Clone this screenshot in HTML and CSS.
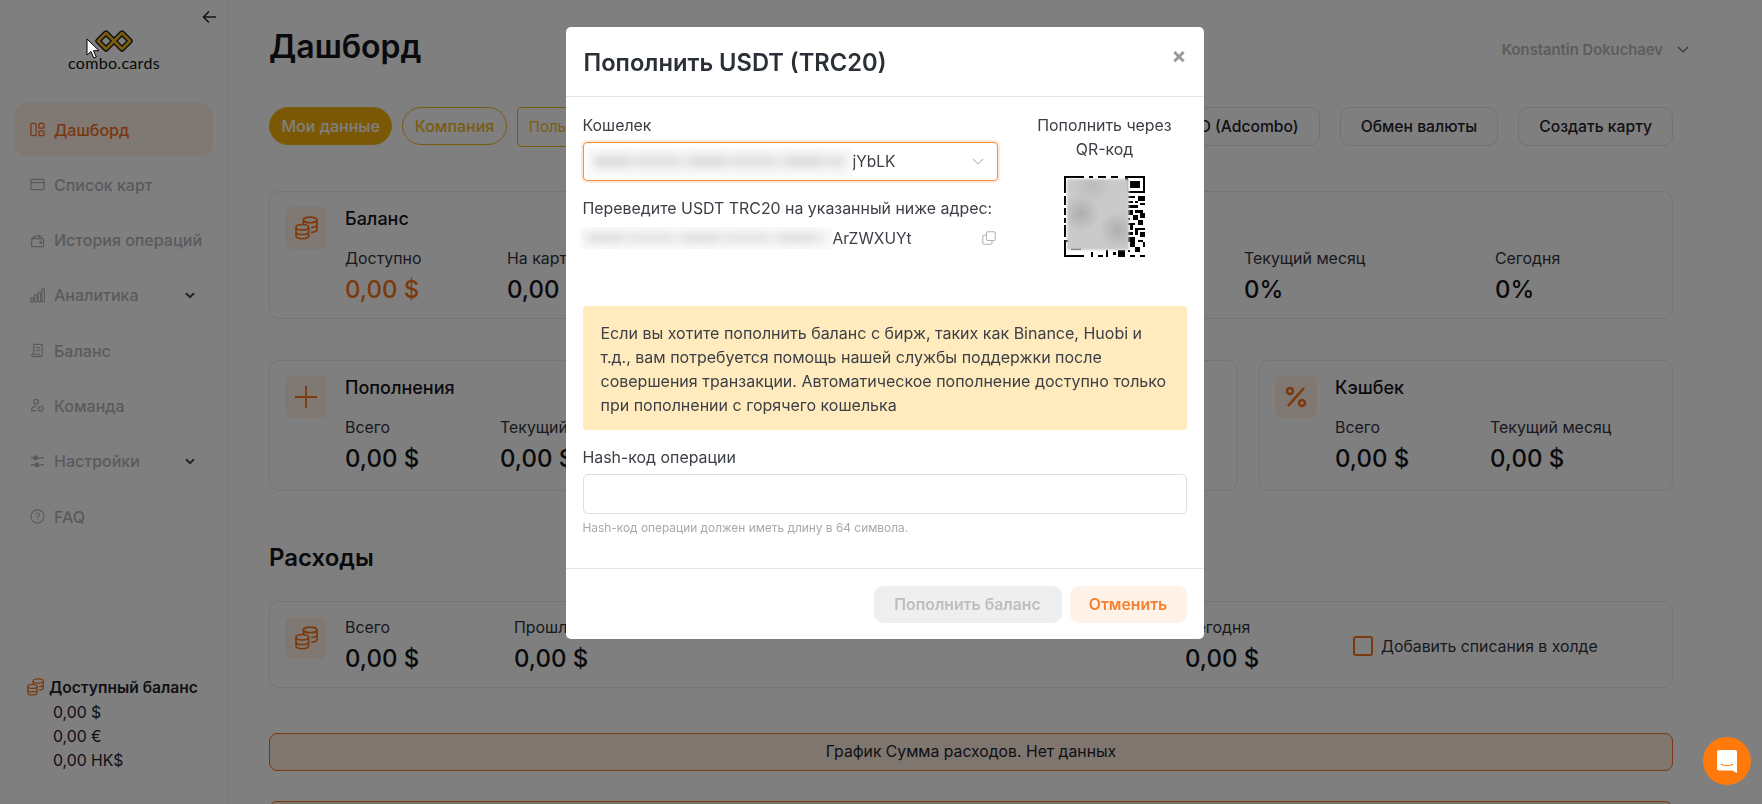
FILE: index.html
```html
<!DOCTYPE html>
<html lang="ru">
<head>
    <meta charset="UTF-8">
    <meta name="viewport" content="width=device-width, initial-scale=1.0">
    <title>Дашборд</title>
    <link rel="stylesheet" href="styles.css">
</head>
<body>

    <svg class="sprite" width="0" height="0">
        <symbol id="coins" viewBox="1 1 22 22.500" fill="none" stroke="currentColor" stroke-width="1.600">
            <ellipse cx="15.500" cy="4.500" rx="6.500" ry="2.700"/>
            <path d="M9 4.500V9M22 4.500v9.500c0 1.300-2.500 2.200-5.500 2.400M22 9.300c0 1.300-2.500 2.200-5.500 2.400"/>
            <ellipse cx="8" cy="11.500" rx="6" ry="2.600"/>
            <path d="M2 11.500V20c0 1.400 2.700 2.500 6 2.500s6-1.100 6-2.500v-8.500M2 16c0 1.400 2.700 2.500 6 2.500s6-1.100 6-2.500"/>
        </symbol>
    </svg>

    <div class="layout">
        <aside class="sidebar">
            <div class="sidebar-head">
                <button class="collapse-btn">
                    <svg width="16" height="14" viewBox="0 0 16 14" fill="none" stroke="#2b2b33" stroke-width="1.6"><path d="M14 7H2M7 1.500 1.500 7 7 12.500"/></svg>
                </button>
                <div class="logo">
                    <svg width="42" height="22" viewBox="0 0 42 22" fill="none" stroke-linejoin="round">
                        <path d="M13 3 5 11l8 8L29 3l8 8-8 8Z" stroke="#1a1a1a" stroke-width="5.400"/>
                        <path d="M13 3 5 11l8 8L29 3l8 8-8 8Z" stroke="#f5b81c" stroke-width="2.800"/>
                    </svg>
                    <span class="logo-text">combo.cards</span>
                </div>
            </div>

            <nav class="nav">
                <a class="nav-item active">
                    <svg class="nav-icon" viewBox="0 0 16 16" fill="none" stroke="currentColor" stroke-width="1.300"><rect x="1" y="1.500" width="5.500" height="13" rx="1"/><rect x="9.500" y="1.500" width="5.500" height="5" rx="1"/><rect x="9.500" y="9.500" width="5.500" height="5" rx="1"/></svg>
                    <span>Дашборд</span>
                </a>
                <a class="nav-item">
                    <svg class="nav-icon" viewBox="0 0 16 16" fill="none" stroke="currentColor" stroke-width="1.300"><rect x="1" y="2.500" width="14" height="11" rx="1"/><path d="M1 6h14"/></svg>
                    <span>Список карт</span>
                </a>
                <a class="nav-item">
                    <svg class="nav-icon" viewBox="0 0 16 16" fill="none" stroke="currentColor" stroke-width="1.300"><path d="M1.500 6.500c0-.8.500-1.300 1.200-1.500L10 2.500v3M2 6h11.500c.5 0 1 .5 1 1v6.500c0 .5-.5 1-1 1h-11c-.5 0-1-.5-1-1Z"/><path d="M12 2.500v3"/><circle cx="11.500" cy="10" r="1"/></svg>
                    <span>История операций</span>
                </a>
                <a class="nav-item">
                    <svg class="nav-icon" viewBox="0 0 16 16" fill="none" stroke="currentColor" stroke-width="1.300"><rect x=".8" y="10" width="2.800" height="5" rx="1.400"/><rect x="4.800" y="7" width="2.800" height="8" rx="1.400"/><rect x="8.700" y="4.500" width="2.800" height="10.500" rx="1.400"/><rect x="12.600" y="1" width="2.800" height="14" rx="1.400"/></svg>
                    <span>Аналитика</span>
                    <svg class="nav-caret" width="10" height="7" viewBox="0 0 10 7" fill="none" stroke="currentColor" stroke-width="2"><path d="M1 1.200 5 5.200 9 1.200"/></svg>
                </a>
                <a class="nav-item">
                    <svg class="nav-icon" viewBox="0 0 16 16" fill="none" stroke="currentColor" stroke-width="1.300"><path d="M4 12V2.500c0-.5.500-1 1-1h8v11.500c0 1-.8 1.500-1.500 1.500h-8C2.500 14.500 2 14 2 13.300V12h8v1.300M6.500 5H11M6.500 8H11"/></svg>
                    <span>Баланс</span>
                </a>
                <a class="nav-item">
                    <svg class="nav-icon" viewBox="0 0 16 16" fill="none" stroke="currentColor" stroke-width="1.300"><circle cx="6.500" cy="4" r="2.500"/><path d="M1.500 13.500c0-3 2-4.500 5-4.500"/><circle cx="11.500" cy="11.500" r="2.500"/><path d="M1.500 13.500H7"/></svg>
                    <span>Команда</span>
                </a>
                <a class="nav-item">
                    <svg class="nav-icon" viewBox="0 0 16 16" fill="none" stroke="currentColor" stroke-width="1.500"><path d="M9 4h6M1 4h2M11 11.500h4M1 11.500h4"/><circle cx="6" cy="4" r="2" fill="currentColor"/><circle cx="7.500" cy="11.500" r="2" fill="currentColor"/></svg>
                    <span>Настройки</span>
                    <svg class="nav-caret" width="10" height="7" viewBox="0 0 10 7" fill="none" stroke="currentColor" stroke-width="2"><path d="M1 1.200 5 5.200 9 1.200"/></svg>
                </a>
                <a class="nav-item">
                    <svg class="nav-icon" viewBox="0 0 16 16" fill="none" stroke="currentColor" stroke-width="1.200"><circle cx="8" cy="8" r="7"/><path d="M5.900 6.200C6 5 6.900 4.300 8 4.300c1.200 0 2.100.8 2.100 1.900 0 1.700-2.100 1.700-2.100 3.300M8 11v.9"/></svg>
                    <span>FAQ</span>
                </a>
            </nav>

            <div class="side-balance">
                <div class="side-balance-title">
                    <svg class="coin-small"><use href="#coins"/></svg>
                    <span>Доступный баланс</span>
                </div>
                <div class="side-balance-row">0,00 $</div>
                <div class="side-balance-row">0,00 €</div>
                <div class="side-balance-row">0,00 HK$</div>
            </div>
        </aside>

        <main class="main">
            <div class="top-row">
                <h1>Дашборд</h1>
                <div class="user">
                    <span>Konstantin Dokuchaev</span>
                    <svg width="12" height="7" viewBox="0 0 12 7" fill="none" stroke="#6c6c6c" stroke-width="1.200"><path d="M1 1 6 6 11 1"/></svg>
                </div>
            </div>

            <div class="toolbar">
                <button class="pill pill-active">Мои данные</button>
                <button class="pill">Компания</button>
                <div class="user-filter">Пользователь</div>
                <div class="toolbar-right">
                    <button class="tool-btn">USD (Adcombo)</button>
                    <button class="tool-btn">Обмен валюты</button>
                    <button class="tool-btn">Создать карту</button>
                </div>
            </div>

            <section class="card card-balance">
                <div class="icon-box"><svg class="coin-big"><use href="#coins"/></svg></div>
                <div class="card-body">
                    <div class="card-title">Баланс</div>
                    <div class="metrics metrics-balance">
                        <div><div class="metric-label">Доступно</div><div class="metric-value accent">0,00 $</div></div>
                        <div><div class="metric-label">На картах</div><div class="metric-value">0,00 $</div></div>
                        <div><div class="metric-label">Текущий месяц</div><div class="metric-value">0%</div></div>
                        <div><div class="metric-label">Сегодня</div><div class="metric-value">0%</div></div>
                    </div>
                </div>
            </section>

            <div class="card-row">
                <section class="card card-topup">
                    <div class="icon-box">
                        <svg width="24" height="24" viewBox="0 0 24 24" fill="none" stroke="#f97316" stroke-width="1.800"><path d="M12 1v22M1 12h22"/></svg>
                    </div>
                    <div class="card-body">
                        <div class="card-title">Пополнения</div>
                        <div class="metrics metrics-topup">
                            <div><div class="metric-label">Всего</div><div class="metric-value">0,00 $</div></div>
                            <div><div class="metric-label">Текущий месяц</div><div class="metric-value">0,00 $</div></div>
                        </div>
                    </div>
                </section>
                <section class="card card-cashback">
                    <div class="icon-box">
                        <svg width="24" height="24" viewBox="0 0 24 24" fill="none" stroke="#f97316" stroke-width="2.600"><circle cx="6" cy="6" r="3"/><circle cx="18" cy="18" r="3"/><path d="M20 3 4 21"/></svg>
                    </div>
                    <div class="card-body">
                        <div class="card-title">Кэшбек</div>
                        <div class="metrics metrics-cashback">
                            <div><div class="metric-label">Всего</div><div class="metric-value">0,00 $</div></div>
                            <div><div class="metric-label">Текущий месяц</div><div class="metric-value">0,00 $</div></div>
                        </div>
                    </div>
                </section>
            </div>

            <h2>Расходы</h2>

            <section class="card card-spend">
                <div class="icon-box"><svg class="coin-big"><use href="#coins"/></svg></div>
                <div class="metrics metrics-spend">
                    <div><div class="metric-label">Всего</div><div class="metric-value">0,00 $</div></div>
                    <div><div class="metric-label">Прошлый месяц</div><div class="metric-value">0,00 $</div></div>
                    <div><div class="metric-label">Сегодня</div><div class="metric-value">0,00 $</div></div>
                    <label class="hold-check"><span class="check-box"></span>Добавить списания в холде</label>
                </div>
            </section>

            <div class="no-data">График Сумма расходов. Нет данных</div>
            <div class="no-data"></div>
        </main>
    </div>

    <div class="overlay">
        <div class="modal">
            <div class="modal-header">
                <div class="modal-title">Пополнить USDT (TRC20)</div>
                <span class="modal-close">×</span>
            </div>

            <div class="modal-body">
                <div class="wallet-row">
                    <div class="wallet-left">
                        <div class="field-label">Кошелек</div>
                        <div class="wallet-select">
                            <span class="blur-bit blur-select"></span>
                            <span>jYbLK</span>
                            <svg class="select-caret" width="12" height="7" viewBox="0 0 12 7" fill="none" stroke="#c4c4c4" stroke-width="1.200"><path d="M1 1 6 6 11 1"/></svg>
                        </div>
                        <div class="field-label transfer-label">Переведите USDT TRC20 на указанный ниже адрес:</div>
                        <div class="address-row">
                            <span class="blur-bit blur-address"></span>
                            <span>ArZWXUYt</span>
                            <svg class="copy-icon" width="14" height="14" viewBox="0 0 14 14" fill="none" stroke="#b5b5b5" stroke-width="1.100"><rect x="4.500" y=".8" width="8.700" height="8.700" rx="1.200"/><path d="M4.500 4H2c-.7 0-1.200.5-1.200 1.200V12c0 .7.500 1.200 1.200 1.200h6.800c.7 0 1.200-.5 1.200-1.200V9.500"/></svg>
                        </div>
                    </div>
                    <div class="wallet-right">
                        <div class="qr-title">Пополнить через QR-код</div>
                        <div class="qr">
                            <svg width="81" height="81" viewBox="0 0 33 33" shape-rendering="crispEdges">
                                <path d="M0 0h8v1H0zM10 0h2v1h-2zM14 0h3v1h-3zM19 0h3v1h-3zM25 0h8v7h-8zM26 1v5h6V1zM27 2h4v3h-4zM0 1h1v6H0zM0 8h1v4H0zM0 13h1v3H0zM0 17h1v2H0zM0 20h1v5H0zM0 26h1v7H0zM1 32h7v1H1zM3 29h4v1H3zM1 26h7v1H1zM26 8h3v1h-3zM30 8h3v2h-3zM26 10h2v1h-2zM29 10h1v1h-1zM31 11h2v1h-2zM26 12h4v1h-4zM26 14h2v2h-2zM29 14h3v1h-3zM31 15h2v2h-2zM26 17h1v1h-1zM28 16h2v2h-2zM26 19h3v1h-3zM30 18h2v2h-2zM27 20h1v2h-1zM29 21h4v1h-4zM26 23h2v1h-2zM29 22h1v2h-1zM31 23h2v2h-2zM26 25h3v2h-3zM30 26h2v1h-2zM27 27h2v2h-2zM32 27h1v2h-1zM26 30h1v1h-1zM29 29h2v2h-2zM27 32h2v1h-2zM31 32h2v1h-2zM11 31h1v2h-1zM14 32h2v1h-2zM17 30h1v3h-1zM20 31h1v1h-1zM22 30h3v3h-3z" fill-rule="evenodd"/>
                            </svg>
                            <span class="qr-blur"></span>
                        </div>
                    </div>
                </div>

                <div class="notice">
                    Если вы хотите пополнить баланс с бирж, таких как Binance, Huobi и т.д., вам потребуется помощь нашей службы поддержки после совершения транзакции. Автоматическое пополнение доступно только при пополнении с горячего кошелька
                </div>

                <div class="field-label hash-label">Hash-код операции</div>
                <input class="hash-input" type="text">
                <div class="hash-hint">Hash-код операции должен иметь длину в 64 символа.</div>
            </div>

            <div class="modal-footer">
                <button class="btn-submit">Пополнить баланс</button>
                <button class="btn-cancel">Отменить</button>
            </div>
        </div>
    </div>

    <button class="chat-btn">
        <svg width="22" height="25" viewBox="0 0 22 25"><path d="M3 1h16c1.200 0 2 .8 2 2v21l-5-2.500H3c-1.200 0-2-.8-2-2V3c0-1.200.8-2 2-2Z" fill="#fff"/><path d="M5 15c3.500 2.300 8.500 2.300 12 0" fill="none" stroke="#ff7a0a" stroke-width="1.300"/></svg>
    </button>

    <svg class="mouse-cursor" width="14" height="21" viewBox="0 0 14 21"><path d="M1 1v16l4-3.500 2.800 6.500 2.500-1-2.800-6.300H13Z" fill="#fff" stroke="#000" stroke-width="1"/></svg>

</body>
</html>
```

FILE: styles.css
```css
* {
    box-sizing: border-box;
}

body {
    margin: 0;
    height: 804px;
    overflow: hidden;
    background: #fff;
    font-family: Inter, 'Noto Sans', sans-serif;
    font-size: 16px;
    color: #22222a;
}

button {
    font-family: inherit;
}

.sprite {
    position: absolute;
}

.layout {
    display: flex;
    height: 804px;
}

/* Sidebar */
.sidebar {
    width: 229px;
    flex-shrink: 0;
    display: flex;
    flex-direction: column;
    border-right: 1px solid #eee;
    padding-bottom: 31px;
}

.sidebar-head {
    height: 103px;
    padding-top: 9px;
    display: flex;
    flex-direction: column;
}

.collapse-btn {
    align-self: flex-end;
    width: 16px;
    height: 16px;
    margin-right: 10px;
    padding: 0;
    border: none;
    background: none;
    line-height: 0;
}

.logo {
    display: flex;
    flex-direction: column;
    align-items: center;
    margin-top: 5px;
}

.logo-text {
    font-family: Lato, sans-serif;
    font-size: 16px;
    line-height: 20px;
    letter-spacing: .3px;
    color: #111;
    margin-top: 1px;
}

.nav {
    display: flex;
    flex-direction: column;
    gap: 2.300px;
    margin: 0 15px 0 14px;
}

.nav-item {
    display: flex;
    align-items: center;
    height: 53px;
    padding-left: 16px;
    padding-right: 18px;
    border-radius: 12px;
    font-weight: 500;
    white-space: nowrap;
    color: #b4b4bc;
}

.nav-item.active {
    background: #fff1e6;
    color: #f46d22;
}

.nav-icon {
    width: 15px;
    height: 15px;
    margin-right: 9px;
    flex-shrink: 0;
}

.nav-caret {
    margin-left: auto;
    color: #44444c;
}

.side-balance {
    margin-top: auto;
    padding-left: 27px;
}

.side-balance-title {
    display: flex;
    align-items: center;
    gap: 5px;
    height: 24px;
    font-size: 15.600px;
    font-weight: 600;
    margin-bottom: 2px;
}

.coin-small {
    width: 17px;
    height: 18px;
    color: #f97316;
}

.side-balance-row {
    height: 24px;
    line-height: 24px;
    padding-left: 26px;
    font-size: 15.800px;
}

/* Main column */
.main {
    flex: 1;
    min-width: 0;
    padding: 0 89px 0 40px;
    overflow: hidden;
}

.top-row {
    height: 107px;
    display: flex;
    justify-content: space-between;
    padding-top: 26px;
}

h1 {
    margin: 0;
    font-size: 32px;
    line-height: 42px;
    font-weight: 600;
    color: #15151a;
}

.user {
    display: flex;
    align-items: center;
    gap: 14px;
    height: 47px;
    margin-right: -16px;
    font-size: 14.800px;
    font-weight: 600;
    color: #b9b9b9;
}

.toolbar {
    display: flex;
    align-items: flex-start;
    height: 39px;
}

.pill {
    height: 38px;
    padding: 0 11.500px;
    margin-right: 10px;
    border: 1px solid #f5b81c;
    border-radius: 19px;
    background: #fff;
    font-size: 16px;
    font-weight: 500;
    color: #f5b81c;
}

.pill-active {
    background: #f7b10c;
    color: #fff;
}

/* runs on under the modal, only its left end shows */
.user-filter {
    height: 40px;
    width: 60px;
    padding: 0 11px;
    line-height: 38px;
    border: 1px solid #f5b81c;
    border-radius: 4px;
    font-size: 15px;
    color: #f5b81c;
    white-space: nowrap;
    overflow: hidden;
}

.toolbar-right {
    margin-left: auto;
    display: flex;
    gap: 20px;
}

.tool-btn {
    height: 39px;
    padding: 0 20px;
    border: 1px solid #e4e4e4;
    border-radius: 10px;
    background: #fff;
    font-size: 15.700px;
    font-weight: 500;
    color: #22222a;
}

.card {
    display: flex;
    gap: 18px;
    padding: 15px;
    border: 1px solid #e8e8e8;
    border-radius: 10px;
}

.card-balance {
    height: 128px;
    margin-top: 45px;
}

.card-row {
    display: flex;
    gap: 21px;
    margin-top: 41px;
}

.card-topup {
    width: 969px;
    height: 131px;
}

.card-cashback {
    flex: 1;
    height: 131px;
}

.icon-box {
    width: 42px;
    height: 42px;
    flex-shrink: 0;
    display: flex;
    align-items: center;
    justify-content: center;
    border-radius: 6px;
    background: #fff1e6;
}

.coin-big {
    width: 23px;
    height: 24px;
    color: #f97316;
}

.card-body {
    flex: 1;
}

.card-title {
    height: 24px;
    line-height: 24px;
    font-size: 18px;
    font-weight: 500;
    color: #15151a;
}

.metrics {
    display: grid;
}

.card-body .metrics {
    margin-top: 17px;
}

.metrics-balance {
    grid-template-columns: 162px 737px 251px auto;
}

.metrics-topup {
    grid-template-columns: 155px auto;
}

.metrics-cashback {
    grid-template-columns: 155px auto;
}

.metric-label {
    height: 24px;
    line-height: 22px;
    font-size: 15.900px;
    color: #33333c;
    white-space: nowrap;
}

.metric-value {
    height: 36px;
    line-height: 36px;
    font-size: 24px;
    font-weight: 500;
    color: #15151a;
    white-space: nowrap;
}

.accent {
    color: #f97316;
}

h2 {
    margin: 50px 0 0;
    height: 34px;
    line-height: 34px;
    font-size: 24px;
    font-weight: 600;
    color: #15151a;
}

.card-spend {
    height: 87px;
    margin-top: 26px;
}

.metrics-spend {
    flex: 1;
    grid-template-columns: 169px 671px 168px auto;
}

.hold-check {
    display: flex;
    align-items: center;
    gap: 8px;
    height: 58px;
    font-size: 15.800px;
    color: #33333c;
}

.check-box {
    width: 20px;
    height: 20px;
    border: 2px solid #f97316;
    border-radius: 3px;
}

.no-data {
    height: 38px;
    margin-top: 45px;
    line-height: 36px;
    border: 1px solid #f97316;
    border-radius: 8px;
    background: #ffede0;
    text-align: center;
    font-size: 15.750px;
    color: #22222a;
}

.no-data + .no-data {
    margin-top: 30px;
}

/* Modal */
.overlay {
    position: fixed;
    inset: 0;
    display: flex;
    justify-content: center;
    align-items: flex-start;
    padding: 27px 0 0 7px;
    background: rgba(0, 0, 0, .5);
}

.modal {
    width: 638px;
    background: #fff;
    border-radius: 5px;
    color: #3c4046;
}

.modal-header {
    height: 70px;
    padding: 0 17px 0 18px;
    display: flex;
    align-items: center;
    justify-content: space-between;
    border-bottom: 1px solid #e5e5e5;
}

.modal-title {
    font-size: 23.700px;
    font-weight: 600;
    color: #2b2f36;
    padding-top: 2px;
}

.modal-close {
    font-size: 22px;
    font-weight: 700;
    line-height: 1;
    color: #999;
    margin-bottom: 14px;
}

.modal-body {
    padding: 17px 17px 31px;
}

.wallet-row {
    display: flex;
    gap: 25px;
    margin-bottom: 49px;
}

.wallet-left {
    width: 415px;
}

.wallet-right {
    flex: 1;
    text-align: center;
}

.field-label {
    height: 24px;
    line-height: 23px;
    font-size: 15.900px;
    white-space: nowrap;
}

.wallet-select {
    position: relative;
    display: flex;
    align-items: center;
    height: 39px;
    margin-top: 4px;
    padding-left: 3px;
    border: 1px solid #fb8c3c;
    border-radius: 4px;
    box-shadow: 0 0 0 2px rgba(251, 140, 60, .18);
    font-size: 15.500px;
}

/* hidden wallet address, smeared in the screenshot */
.blur-bit {
    position: relative;
    display: block;
    flex-shrink: 0;
    overflow: hidden;
    background: #fafafa;
}

.blur-bit::before {
    content: "";
    position: absolute;
    inset: 32% 3%;
    background: repeating-linear-gradient(90deg, #d6d6d6 0 34px, #e4e4e4 34px 44px, #dcdcdc 44px 86px, #e8e8e8 86px 96px);
    filter: blur(5px);
}

.blur-select {
    width: 266px;
    height: 28px;
}

.select-caret {
    margin-left: auto;
    margin-right: 13px;
}

.transfer-label {
    margin-top: 16px;
}

.address-row {
    display: flex;
    align-items: center;
    height: 24px;
    margin-top: 5px;
    font-size: 15.600px;
}

.blur-address {
    width: 253px;
    height: 22px;
    margin-left: -3px;
}

.copy-icon {
    margin-left: auto;
    margin-right: 2px;
}

.qr-title {
    font-size: 15.900px;
    line-height: 24px;
}

.qr {
    position: relative;
    width: 81px;
    height: 81px;
    margin: 14px auto 0;
    line-height: 0;
}

.qr-blur {
    position: absolute;
    left: 3px;
    top: 3px;
    width: 62px;
    height: 71px;
    background:
        radial-gradient(circle at 22% 48%, #adadad, transparent 30%),
        radial-gradient(circle at 82% 72%, #afafaf, transparent 26%),
        radial-gradient(circle at 40% 10%, #bbbbbb, transparent 25%),
        #cacaca;
    filter: blur(1px);
}

.notice {
    height: 124px;
    padding: 15px 13px 14px 18px;
    border-radius: 3px;
    background: #ffebbd;
    font-size: 16px;
    line-height: 24px;
}

.hash-label {
    margin-top: 16px;
}

.hash-input {
    display: block;
    width: 100%;
    height: 40px;
    margin-top: 4px;
    border: 1px solid #dedede;
    border-radius: 5px;
    outline: none;
}

.hash-hint {
    margin-top: 5px;
    font-size: 11.900px;
    line-height: 18px;
    color: #a9a9a9;
}

.modal-footer {
    display: flex;
    justify-content: flex-end;
    gap: 8px;
    padding: 17px 17px 16px;
    border-top: 1px solid #e5e5e5;
}

.btn-submit,
.btn-cancel {
    height: 37px;
    border: none;
    border-radius: 9px;
    font-size: 15.800px;
    font-weight: 600;
}

.btn-submit {
    width: 188px;
    background: #efefef;
    color: #bdbdbd;
}

.btn-cancel {
    width: 117px;
    background: #fff2e8;
    color: #f98030;
}

.chat-btn {
    position: fixed;
    left: 1703px;
    top: 737px;
    display: flex;
    align-items: center;
    justify-content: center;
    width: 48px;
    height: 48px;
    padding: 0;
    border: none;
    border-radius: 50%;
    background: #ff7a0a;
}

.mouse-cursor {
    position: fixed;
    left: 86px;
    top: 38px;
}
```
